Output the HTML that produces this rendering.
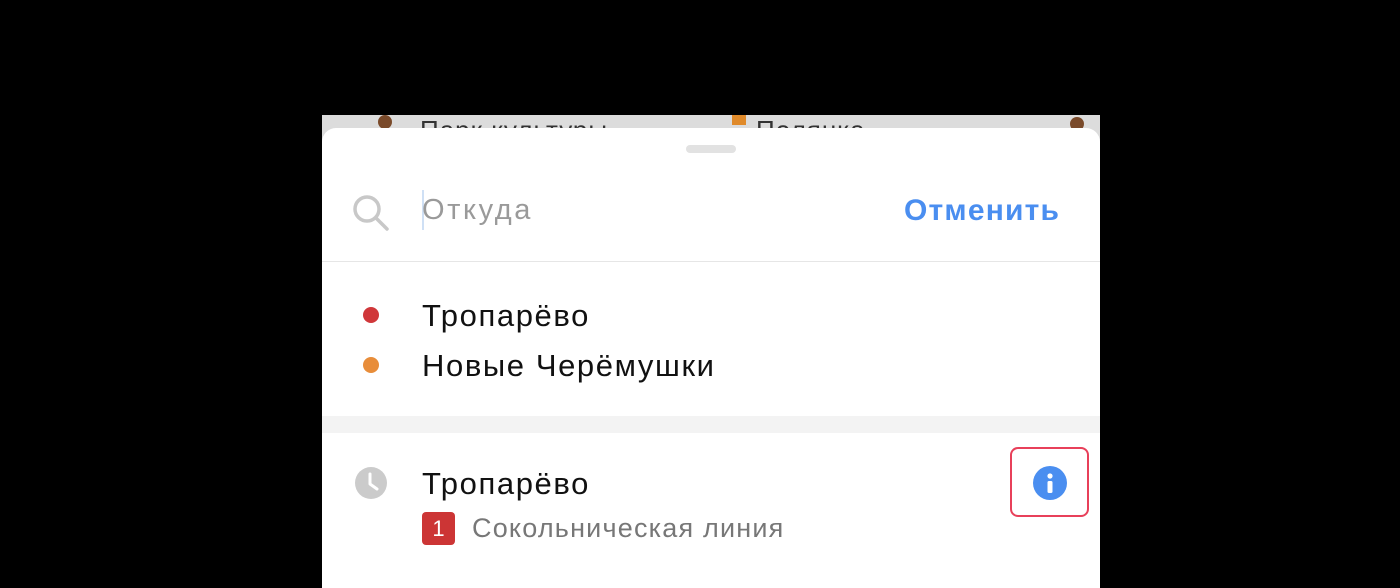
<!DOCTYPE html>
<html><head><meta charset="utf-8"><style>
*{margin:0;padding:0;box-sizing:border-box}
body{width:1400px;height:573px;background:#000;position:relative;overflow:hidden;font-family:"Liberation Sans","DejaVu Sans",sans-serif}
.a{position:absolute}
.map{left:322px;top:115px;width:778px;height:30px;background:#dcdcdc;overflow:hidden}
.card{left:322px;top:128px;width:778px;height:460px;background:#fff;border-radius:14px 14px 0 0}
.t{white-space:nowrap;line-height:1}
</style></head><body>
<div class="a map">
 <div class="a t" style="left:98px;top:2px;font-size:26px;color:#333;letter-spacing:1px">Парк культуры</div>
 <div class="a t" style="left:434px;top:2px;font-size:26px;color:#333;letter-spacing:1px">Полянка</div>
 <div class="a" style="left:56px;top:0;width:14px;height:14px;border-radius:50%;background:#7a4a2a"></div>
 <div class="a" style="left:410px;top:0;width:14px;height:10px;background:#e08a2a"></div>
 <div class="a" style="left:748px;top:2px;width:14px;height:14px;border-radius:50%;background:#7a4a2a"></div>
</div>
<div class="a card"></div>
<div class="a" style="left:686px;top:145px;width:50px;height:8px;border-radius:4px;background:#e2e2e2"></div>
<svg class="a" style="left:350px;top:192px" width="42" height="42" viewBox="0 0 42 42"><circle cx="17" cy="17" r="12" fill="none" stroke="#c8c8c8" stroke-width="3.5"/><line x1="26" y1="26" x2="37" y2="37" stroke="#c8c8c8" stroke-width="3.5" stroke-linecap="round"/></svg>
<div class="a" style="left:422px;top:190px;width:2px;height:40px;background:#cfe0f5"></div>
<div class="a t" style="left:422px;top:196px;font-size:29px;color:#9a9a9a;letter-spacing:2.6px">Откуда</div>
<div class="a t" style="left:904px;top:196px;font-size:30px;font-weight:bold;color:#4a8ef0;letter-spacing:1.2px">Отменить</div>
<div class="a" style="left:322px;top:261px;width:778px;height:1px;background:#e6e6e6"></div>
<div class="a" style="left:363px;top:307px;width:16px;height:16px;border-radius:50%;background:#d0373a"></div>
<div class="a t" style="left:422px;top:300px;font-size:31px;color:#111;letter-spacing:1.6px">Тропарёво</div>
<div class="a" style="left:363px;top:357px;width:16px;height:16px;border-radius:50%;background:#e88d3a"></div>
<div class="a t" style="left:422px;top:350px;font-size:31px;color:#111;letter-spacing:1.6px">Новые Черёмушки</div>
<div class="a" style="left:322px;top:416px;width:778px;height:17px;background:#f3f3f3"></div>
<svg class="a" style="left:355px;top:467px" width="32" height="32" viewBox="0 0 32 32"><circle cx="16" cy="16" r="16" fill="#cbcbcb"/><path d="M15 7v10l7 5" fill="none" stroke="#fff" stroke-width="3" stroke-linecap="round" stroke-linejoin="round"/></svg>
<div class="a t" style="left:422px;top:468px;font-size:31px;color:#111;letter-spacing:1.6px">Тропарёво</div>
<div class="a" style="left:422px;top:512px;width:33px;height:33px;border-radius:4px;background:#cc3535;color:#fff;font-size:22px;text-align:center;line-height:33px">1</div>
<div class="a t" style="left:472px;top:515px;font-size:27px;color:#777;letter-spacing:1.2px">Сокольническая линия</div>
<div class="a" style="left:1010px;top:447px;width:79px;height:70px;border:2px solid #e8405a;border-radius:8px"></div>
<svg class="a" style="left:1033px;top:466px" width="34" height="34" viewBox="0 0 34 34"><circle cx="17" cy="17" r="17" fill="#4a8ef0"/><circle cx="17" cy="10" r="2.6" fill="#fff"/><rect x="14.5" y="15" width="5" height="12" rx="1.5" fill="#fff"/></svg>
</body></html>
